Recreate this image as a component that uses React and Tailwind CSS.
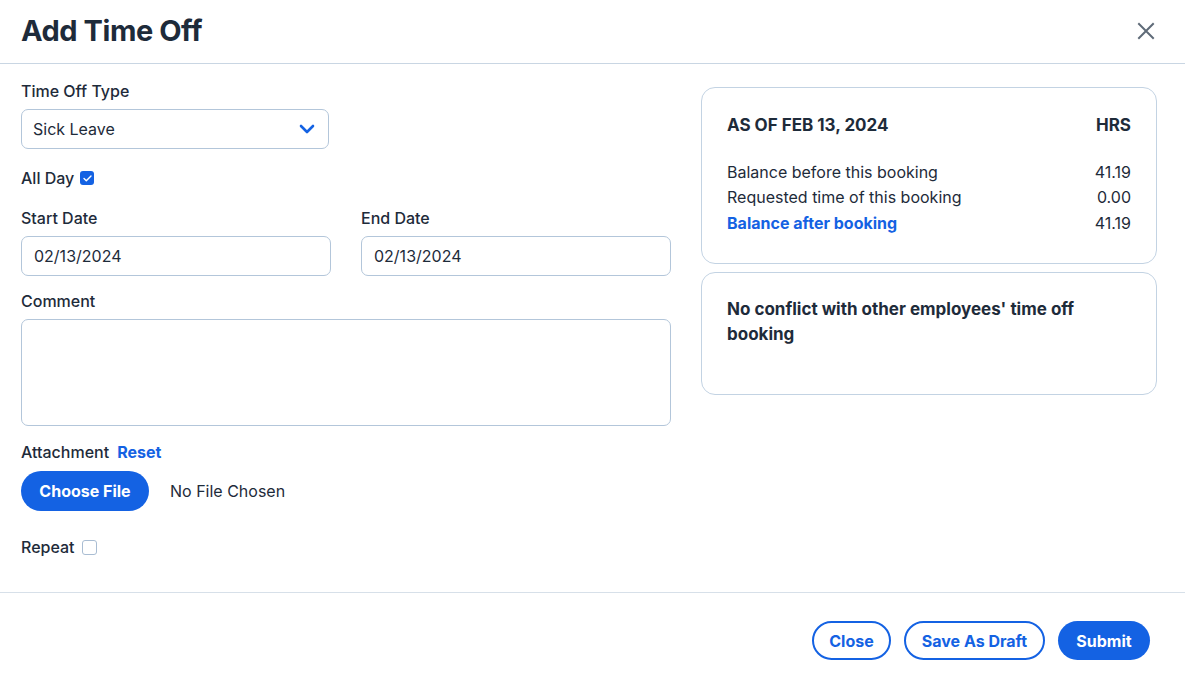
import { useState } from "react";

export default function App() {
  const [allDay, setAllDay] = useState(true);
  const [repeat, setRepeat] = useState(false);

  return (
    <div className="w-[1185px] h-[676px] bg-white text-[#1e2b3a] flex flex-col" style={{ fontFamily: "Inter, 'Noto Sans', sans-serif" }}>
      {/* header */}
      <div className="h-[64px] flex items-center justify-between pl-[21px] pr-[30px] border-b border-[#c9d6e3] shrink-0">
        <h1 className="text-[29px] font-bold tracking-[-0.45px] leading-none pb-[2px]">Add Time Off</h1>
        <button className="text-[#5f6b78] -mt-[2px]">
          <svg width="18" height="18" viewBox="0 0 18 18" fill="none" stroke="currentColor" strokeWidth="2" strokeLinecap="square">
            <path d="M2 2L16 16M16 2L2 16" />
          </svg>
        </button>
      </div>

      {/* body */}
      <div className="flex-1 flex gap-[30px] px-[21px] pt-[17px]">
        <div className="w-[650px] flex flex-col">
          <label className="text-[16px] leading-[20px] font-medium">Time Off Type</label>
          <div className="mt-[8px] w-[308px] h-[40px] border border-[#b3c6da] rounded-[7px] flex items-center justify-between pl-[11px] pr-[13px]">
            <span className="text-[16px]">Sick Leave</span>
            <svg width="16" height="10" viewBox="0 0 16 10" fill="none" stroke="#1462e3" strokeWidth="2.6" strokeLinecap="round" strokeLinejoin="round">
              <path d="M2 2l6 6 6-6" />
            </svg>
          </div>

          <div className="mt-[19px] flex items-center gap-[6px]">
            <span className="text-[16px] leading-[20px] font-medium">All Day</span>
            <button onClick={() => setAllDay(!allDay)} className={`w-[14px] h-[14px] rounded-[3px] flex items-center justify-center ${allDay ? "bg-[#1462e3]" : "border border-[#a9bdd3]"}`}>
              {allDay && (
                <svg width="9" height="7" viewBox="0 0 9 7" fill="none" stroke="white" strokeWidth="1.4" strokeLinecap="round" strokeLinejoin="round">
                  <path d="M1 3.5l2.3 2.3L8 1" />
                </svg>
              )}
            </button>
          </div>

          <div className="mt-[20px] grid grid-cols-2 gap-[30px]">
            <div>
              <label className="text-[16px] leading-[20px] font-medium block">Start Date</label>
              <div className="mt-[8px] h-[40px] border border-[#b3c6da] rounded-[7px] flex items-center pl-[12px] text-[16px]">02/13/2024</div>
            </div>
            <div>
              <label className="text-[16px] leading-[20px] font-medium block">End Date</label>
              <div className="mt-[8px] h-[40px] border border-[#b3c6da] rounded-[7px] flex items-center pl-[12px] text-[16px]">02/13/2024</div>
            </div>
          </div>

          <label className="mt-[15px] text-[16px] leading-[20px] font-medium">Comment</label>
          <div className="mt-[8px] h-[107px] border border-[#b3c6da] rounded-[7px]" />

          <div className="mt-[16px] flex items-center gap-[8px] text-[16px] leading-[20px]">
            <span className="font-medium">Attachment</span>
            <span className="font-bold text-[#1462e3]">Reset</span>
          </div>
          <div className="mt-[9px] flex items-center gap-[21px]">
            <button className="w-[128px] h-[40px] rounded-full bg-[#1462e3] text-white font-bold text-[16px]">Choose File</button>
            <span className="text-[16px]">No File Chosen</span>
          </div>

          <div className="mt-[26px] flex items-center gap-[7px]">
            <span className="text-[16px] leading-[20px] font-medium">Repeat</span>
            <button onClick={() => setRepeat(!repeat)} className="w-[15px] h-[15px] rounded-[3px] border border-[#a9bdd3]" />
          </div>
        </div>

        <div className="w-[456px] flex flex-col gap-[8px] pt-[6px]">
          <div className="h-[177px] border border-[#c3d3e3] rounded-[14px] px-[25px] pt-[26px]">
            <div className="flex justify-between font-bold text-[17px] leading-[22px]">
              <span>AS OF FEB 13, 2024</span>
              <span>HRS</span>
            </div>
            <div className="mt-[24px] flex flex-col text-[16px] leading-[25px]">
              <div className="flex justify-between"><span>Balance before this booking</span><span>41.19</span></div>
              <div className="flex justify-between"><span>Requested time of this booking</span><span>0.00</span></div>
              <div className="flex justify-between pt-[1px]"><span className="font-bold text-[#1462e3]">Balance after booking</span><span>41.19</span></div>
            </div>
          </div>
          <div className="h-[123px] border border-[#c3d3e3] rounded-[14px] px-[25px] pt-[24px]">
            <p className="font-bold text-[17px] leading-[25px]">No conflict with other employees' time off booking</p>
          </div>
        </div>
      </div>

      {/* footer */}
      <div className="h-[84px] border-t border-[#d7e0e9] flex items-start justify-end gap-[13px] pt-[28px] pr-[35px] shrink-0">
        <button className="h-[39px] w-[79px] rounded-full border-2 border-[#1462e3] text-[#1462e3] font-bold text-[16px]">Close</button>
        <button className="h-[39px] w-[141px] rounded-full border-2 border-[#1462e3] text-[#1462e3] font-bold text-[16px]">Save As Draft</button>
        <button className="h-[39px] w-[92px] rounded-full bg-[#1462e3] text-white font-bold text-[16px]">Submit</button>
      </div>
    </div>
  );
}
